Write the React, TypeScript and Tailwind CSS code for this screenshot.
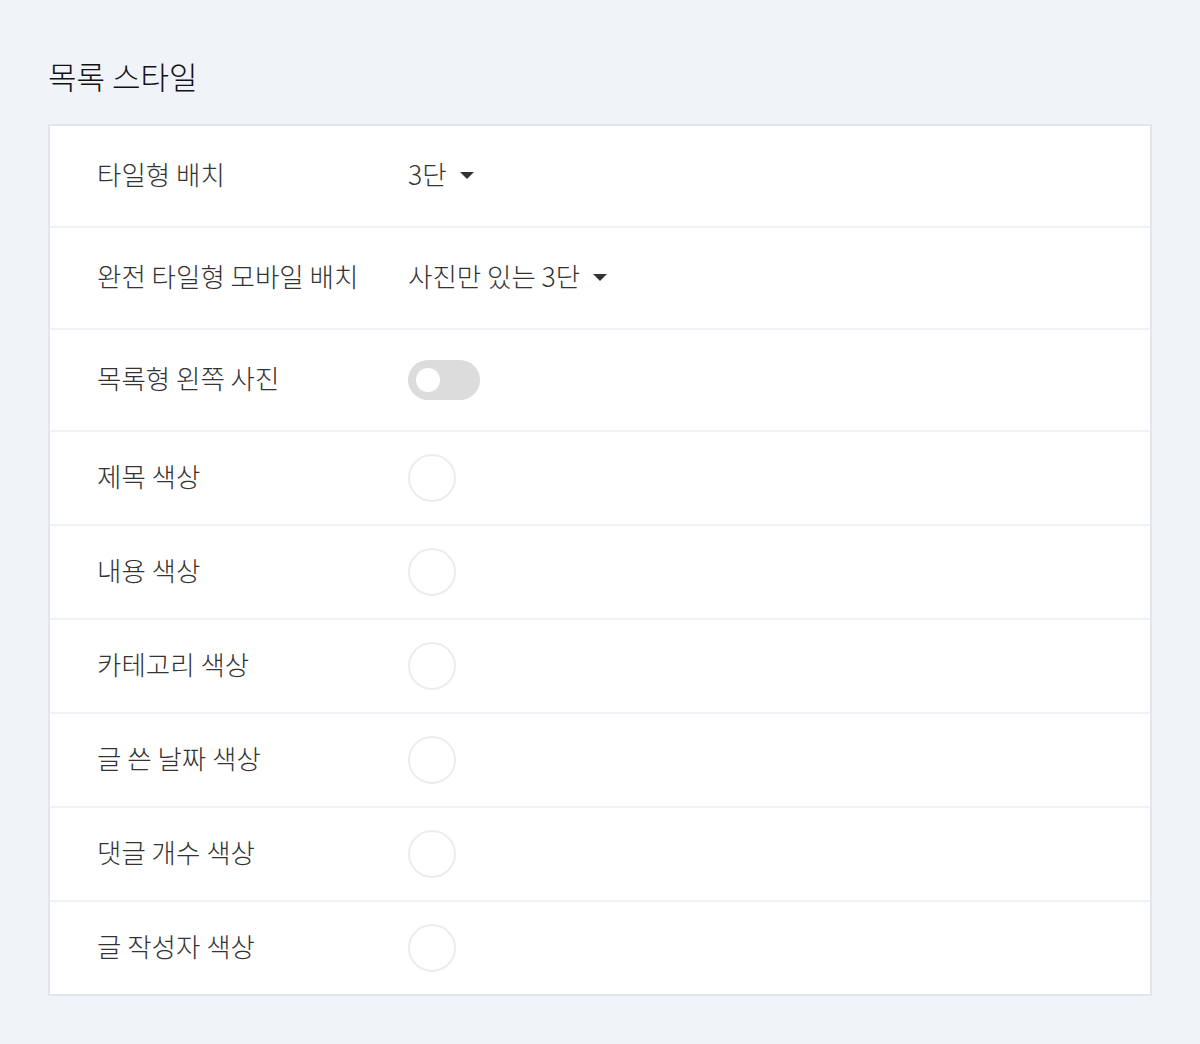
import React from "react";

const font = { fontFamily: '"Noto Sans CJK KR", "Noto Sans", sans-serif' };

function Caret() {
  return (
    <svg width="14" height="7" viewBox="0 0 14 7" className="ml-[13px] mt-[3px]">
      <path d="M0 0 L14 0 L7 7 Z" fill="#333" />
    </svg>
  );
}

function Circle() {
  return <div className="w-[48px] h-[48px] rounded-full border-2 border-[#ececec] bg-white" />;
}

function Toggle() {
  return (
    <div className="w-[72px] h-[40px] rounded-full bg-[#dcdcdc] flex items-center pl-[8px]">
      <div className="w-[24px] h-[24px] rounded-full bg-white" />
    </div>
  );
}

const colorRows = ["제목 색상", "내용 색상", "카테고리 색상", "글 쓴 날짜 색상", "댓글 개수 색상", "글 작성자 색상"];

export default function App() {
  return (
    <div className="min-h-[1044px] w-full bg-[#f0f3f7] pt-[55px] px-[48px]" style={font}>
      <h2 className="text-[31px] leading-[42px] font-light text-[#111] mb-[27px]">목록 스타일</h2>
      <div className="w-[1104px] bg-white border-2 border-[#e2e6ee] text-[26.5px] font-light text-[#333]">
        <div className="h-[102px] flex items-center border-b-2 border-[#eef1f5]">
          <div className="w-[358px] pl-[47px] pb-[4px]">타일형 배치</div>
          <div className="flex items-center pb-[4px]">3단<Caret /></div>
        </div>
        <div className="h-[102px] flex items-center border-b-2 border-[#eef1f5]">
          <div className="w-[358px] pl-[47px] pb-[4px]">완전 타일형 모바일 배치</div>
          <div className="flex items-center pb-[4px]">사진만 있는 3단<Caret /></div>
        </div>
        <div className="h-[102px] flex items-center border-b-2 border-[#eef1f5]">
          <div className="w-[358px] pl-[47px] pb-[4px]">목록형 왼쪽 사진</div>
          <Toggle />
        </div>
        {colorRows.map((label, i) => (
          <div
            key={label}
            className={
              i < colorRows.length - 1
                ? "h-[94px] flex items-center border-b-2 border-[#eef1f5]"
                : "h-[92px] flex items-center"
            }
          >
            <div className="w-[358px] pl-[47px] pb-[4px]">{label}</div>
            <Circle />
          </div>
        ))}
      </div>
    </div>
  );
}
